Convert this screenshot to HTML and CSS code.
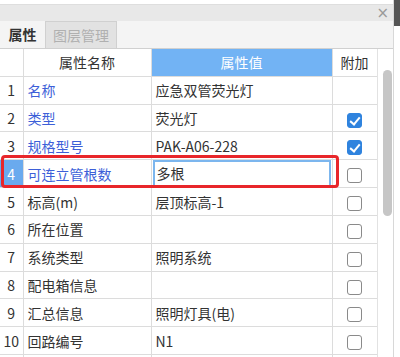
FILE: index.html
```html
<!DOCTYPE html>
<html lang="zh">
<head>
    <meta charset="UTF-8">
    <title>属性</title>
    <link rel="stylesheet" href="styles.css">
</head>
<body>
    <div class="window">
        <div class="panel">
            <div class="titlebar"><span class="close">×</span></div>
            <div class="tabs">
                <div class="tab active">属性</div>
                <div class="tab">图层管理</div>
            </div>
            <div class="grid-wrap">
                <div class="table-box">
                    <table class="props">
                        <colgroup>
                            <col class="c-num"><col class="c-name"><col class="c-val"><col class="c-add">
                        </colgroup>
                        <tr class="head">
                            <th></th><th>属性名称</th><th class="val-head">属性值</th><th>附加</th>
                        </tr>
                        <tr><td class="num">1</td><td class="name link">名称</td><td>应急双管荧光灯</td><td></td></tr>
                        <tr><td class="num">2</td><td class="name link">类型</td><td>荧光灯</td><td><span class="chk on"></span></td></tr>
                        <tr><td class="num">3</td><td class="name link">规格型号</td><td>PAK-A06-228</td><td><span class="chk on"></span></td></tr>
                        <tr class="current"><td class="num">4</td><td class="name link">可连立管根数</td><td class="editing"><div class="editor">多根</div></td><td><span class="chk"></span></td></tr>
                        <tr><td class="num">5</td><td class="name">标高(m)</td><td>层顶标高-1</td><td><span class="chk"></span></td></tr>
                        <tr><td class="num">6</td><td class="name">所在位置</td><td></td><td><span class="chk"></span></td></tr>
                        <tr><td class="num">7</td><td class="name">系统类型</td><td>照明系统</td><td><span class="chk"></span></td></tr>
                        <tr><td class="num">8</td><td class="name">配电箱信息</td><td></td><td><span class="chk"></span></td></tr>
                        <tr><td class="num">9</td><td class="name">汇总信息</td><td>照明灯具(电)</td><td><span class="chk"></span></td></tr>
                        <tr><td class="num">10</td><td class="name">回路编号</td><td>N1</td><td><span class="chk"></span></td></tr>
                        <tr><td class="num"></td><td></td><td></td><td></td></tr>
                    </table>
                    <!-- 红框标注 -->
                    <div class="mark"></div>
                </div>
                <div class="scroll"><div class="thumb"></div></div>
            </div>
        </div>
        <div class="edge"></div>
    </div>
</body>
</html>
```

FILE: styles.css
```css
body { margin: 0; background: #fff; font-family: "Noto Sans CJK SC", "Noto Sans", sans-serif; color: #333; overflow: hidden; }
.window { display: flex; height: 357px; overflow: hidden; }
.panel { width: 393px; border-right: 1px solid #d8d8d8; }
.edge { width: 6px; height: 26px; background: #555; }

.titlebar {
    height: 16px;
    margin-top: 4px;
    background: #e8e8e8;
    border-top: 1px solid #dedede;
    display: flex;
    justify-content: flex-end;
    align-items: center;
}
.close { color: #9a9a9a; font-size: 15px; line-height: 16px; margin-right: 4px; font-family: "DejaVu Sans", sans-serif; }

.tabs {
    height: 27px;
    background: #f4f4f4;
    border-bottom: 1px solid #d0d0d0;
    display: flex;
    align-items: flex-end;
}
.tab {
    height: 27px;
    line-height: 26px;
    font-size: 14px;
    white-space: nowrap;
    box-sizing: border-box;
    text-align: center;
}
.tab.active { width: 45px; font-weight: bold; color: #333; }
.tab:not(.active) { width: 72px; background: #e2e2e2; color: #b0b0b0; border: 1px solid #d0d0d0; border-bottom: none; }

.grid-wrap { display: flex; }
.table-box { position: relative; width: 377px; }
.scroll { width: 16px; border-left: 1px solid #e2e2e2; position: relative; }
.thumb { width: 9px; height: 146px; margin: 21px 0 0 5px; background: #c6c6c6; border-radius: 5px; }

.props { border-collapse: collapse; table-layout: fixed; width: 377px; font-size: 14px; }
.c-num { width: 23px; }
.c-name { width: 128px; }
.c-val { width: 181px; }
.c-add { width: 45px; }
.props td, .props th {
    height: 26.8px;
    border: 1px solid #dcdcdc;
    padding: 0 4px;
    white-space: nowrap;
    overflow: hidden;
}
.props tr:first-child th { border-top: none; }
.props td:first-child, .props th:first-child { border-left: none; }
.props th { font-weight: normal; color: #333; text-align: center; }
.props th.val-head { background: #72b3f4; color: #fff; }
.num { text-align: center; padding: 0 !important; }
.link { color: #3d5fd8; }
.props td:last-child { text-align: center; }

.current .num { background: #6aaaee; color: #fff; }
.props td.editing { padding: 0 1px; }
.editor { height: 23px; line-height: 23px; border: 2px solid #7cb6ee; padding-left: 2px; }

.chk {
    display: inline-block;
    width: 13px;
    height: 13px;
    border: 1.5px solid #8a8a8a;
    border-radius: 3px;
    vertical-align: middle;
    box-sizing: content-box;
}
.chk.on { background: #2f83de; border-color: #2f83de; position: relative; }
.chk.on::after {
    content: "";
    position: absolute;
    left: 4px;
    top: 1px;
    width: 4px;
    height: 8px;
    border: solid #fff;
    border-width: 0 2px 2px 0;
    transform: rotate(40deg);
}

.mark {
    position: absolute;
    left: 1px;
    top: 106px;
    width: 332px;
    height: 27px;
    border: 3px solid #e8262a;
    border-radius: 4px;
}
```
